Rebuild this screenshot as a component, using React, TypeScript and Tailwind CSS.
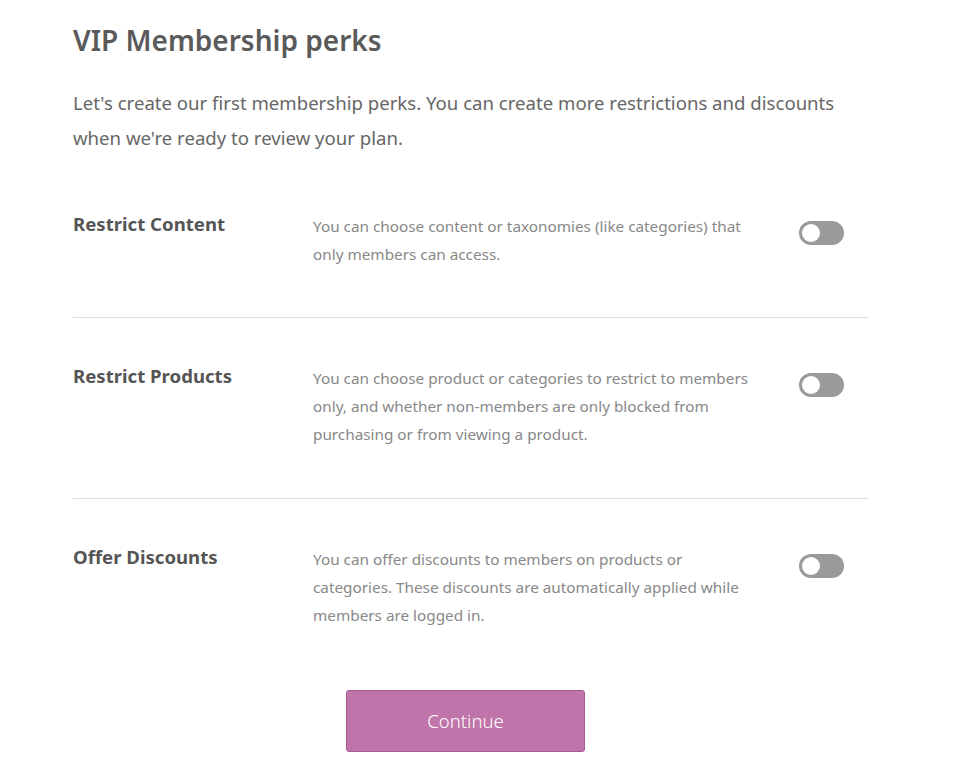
import React from "react";

function Toggle() {
  return (
    <div className="mt-[9px] flex h-[24px] w-[45px] shrink-0 items-center rounded-full bg-[#9a9a9a] px-[3px]">
      <div className="h-[18px] w-[18px] rounded-full bg-white" />
    </div>
  );
}

function Row({ title, desc, cls }: { title: string; desc: string; cls: string }) {
  return (
    <div className={`flex ${cls}`}>
      <div className="w-[240px] shrink-0 text-[18.6px] font-bold leading-[24px] text-[#555]">{title}</div>
      <div className="w-[445px] shrink-0 text-[15.3px] leading-[28px] text-[#888]">{desc}</div>
      <div className="flex flex-1 justify-end pr-[24px]">
        <Toggle />
      </div>
    </div>
  );
}

export default function App() {
  return (
    <div className="min-h-[783px] bg-white" style={{ fontFamily: '"Noto Sans", "Open Sans", sans-serif' }}>
      <div className="ml-[73px] w-[795px] pt-[20px]">
        <h1 className="text-[28px] font-semibold leading-[40px] text-[#5a5a5a]">VIP Membership perks</h1>
        <p className="mt-[25px] text-[18.6px] leading-[35px] text-[#666]">
          Let's create our first membership perks. You can create more restrictions and discounts when we're ready to review your plan.
        </p>
        <div className="mt-[9px]">
          <Row
            cls="pt-12 pb-[49px] border-b border-[#dcdcdc]"
            title="Restrict Content"
            desc="You can choose content or taxonomies (like categories) that only members can access."
          />
          <Row
            cls="pt-[46px] pb-[50px] border-b border-[#dcdcdc]"
            title="Restrict Products"
            desc="You can choose product or categories to restrict to members only, and whether non-members are only blocked from purchasing or from viewing a product."
          />
          <Row
            cls="pt-[46px] pb-12"
            title="Offer Discounts"
            desc="You can offer discounts to members on products or categories. These discounts are automatically applied while members are logged in."
          />
        </div>
        <div className="mt-[13px] flex justify-center pr-[10px]">
          <button className="h-[62px] w-[239px] rounded-[3px] border border-[#a85b93] bg-[#bf74aa] text-[18.5px] font-light text-white">
            Continue
          </button>
        </div>
      </div>
    </div>
  );
}
